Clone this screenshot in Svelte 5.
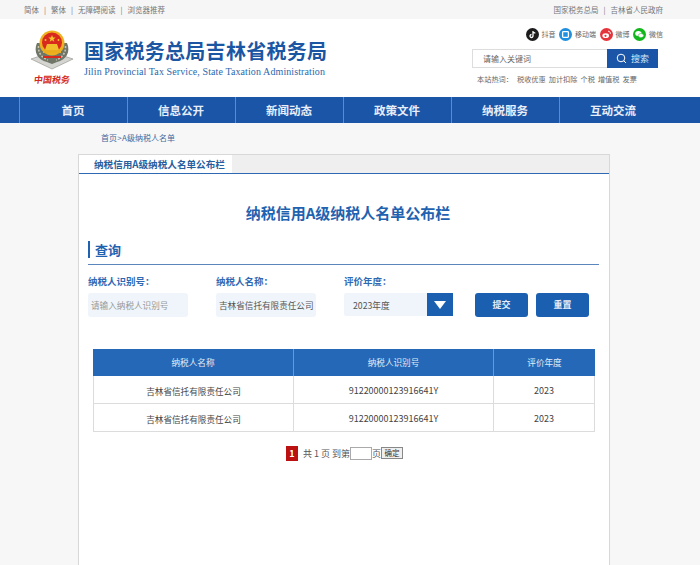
<script>
  const navItems = ['首页', '信息公开', '新闻动态', '政策文件', '纳税服务', '互动交流'];
  const hotWords = ['税收优惠', '加计扣除', '个税', '增值税', '发票'];
  const rows = [
    { name: '吉林省信托有限责任公司', id: '91220000123916641Y', year: '2023' },
    { name: '吉林省信托有限责任公司', id: '91220000123916641Y', year: '2023' }
  ];
</script>

<div class="page">
  <div class="topbar">
    <div class="links">
      <span>简体</span><i>|</i><span>繁体</span><i>|</i><span>无障碍阅读</span><i>|</i><span>浏览器推荐</span>
    </div>
    <div class="links right">
      <span>国家税务总局</span><i>|</i><span>吉林省人民政府</span>
    </div>
  </div>

  <header class="header">
    <div class="logo">
      <svg width="44" height="42" viewBox="0 0 44 42" aria-hidden="true">
        <path d="M1 29 L13 25 L22 33 L31 25 L43 29 L22 39 Z" fill="#d4d4d0" stroke="#8d8d88" stroke-width="0.6"/>
        <path d="M7 13 C3 22 8 30 17 32 L22 34 L27 32 C36 30 41 22 37 13 Z" fill="#6f7668"/>
        <path d="M8.5 16 C8 23 12 28 18 30 M35.5 16 C36 23 32 28 26 30" fill="none" stroke="#c9c5b0" stroke-width="1.6" stroke-dasharray="2 1.5"/>
        <circle cx="22" cy="13" r="12.5" fill="#edb11f"/>
        <circle cx="22" cy="12.5" r="10" fill="#d9281e"/>
        <path d="M22 5 l1 2.6 2.7 0 -2.2 1.6 .8 2.6 -2.3 -1.6 -2.3 1.6 .8 -2.6 -2.2 -1.6 2.7 0 Z" fill="#f4c52d"/>
        <circle cx="15.5" cy="10" r="1" fill="#f4c52d"/>
        <circle cx="28.5" cy="10" r="1" fill="#f4c52d"/>
        <path d="M15 20 L17 14 H27 L29 20 Z" fill="#f1bd2b"/>
        <rect x="13" y="20" width="18" height="3" fill="#e9ad1e"/>
        <path d="M13 27 H31" stroke="#d9281e" stroke-width="2"/>
      </svg>
      <span class="logo-cn">中国税务</span>
    </div>
    <div class="brand">
      <div class="brand-cn">国家税务总局吉林省税务局</div>
      <div class="brand-en">Jilin Provincial Tax Service, State Taxation Administration</div>
    </div>
    <div class="tools">
      <div class="socials">
        <span class="social">
          <svg width="13" height="13" viewBox="0 0 13 13" aria-hidden="true"><circle cx="6.5" cy="6.5" r="6.5" fill="#1c1c1c"/><path d="M7 3 V8 A1.5 1.5 0 1 1 5.5 6.5 M7 3 C7.2 4.3 8 5 9.3 5.1" fill="none" stroke="#fff" stroke-width="1.3"/></svg>
          抖音
        </span>
        <span class="social">
          <svg width="13" height="13" viewBox="0 0 13 13" aria-hidden="true"><circle cx="6.5" cy="6.5" r="6.5" fill="#1f8fe0"/><rect x="3.6" y="3.6" width="5.8" height="5.8" rx="0.8" fill="none" stroke="#fff" stroke-width="1.3"/></svg>
          移动端
        </span>
        <span class="social">
          <svg width="13" height="13" viewBox="0 0 13 13" aria-hidden="true"><circle cx="6.5" cy="6.5" r="6.5" fill="#e5343c"/><ellipse cx="5.7" cy="7.7" rx="3.3" ry="2.4" fill="#fff"/><circle cx="5.5" cy="7.8" r="1.1" fill="#e5343c"/><path d="M8 3.2 C9.6 3.2 10.6 4.3 10.4 5.9" fill="none" stroke="#fff" stroke-width="0.9"/></svg>
          微博
        </span>
        <span class="social">
          <svg width="13" height="13" viewBox="0 0 13 13" aria-hidden="true"><circle cx="6.5" cy="6.5" r="6.5" fill="#12b71d"/><ellipse cx="5.4" cy="5.6" rx="3.2" ry="2.5" fill="#fff"/><ellipse cx="8" cy="7.6" rx="2.7" ry="2.1" fill="#fff" stroke="#12b71d" stroke-width="0.5"/></svg>
          微信
        </span>
      </div>
      <div class="search">
        <div class="search-input">请输入关键词</div>
        <div class="search-btn">
          <svg width="11" height="11" viewBox="0 0 11 11" aria-hidden="true"><circle cx="5" cy="5" r="3.8" fill="none" stroke="#fff" stroke-width="1"/><path d="M7.8 7.8 L10 10" stroke="#fff" stroke-width="1"/></svg>
          搜索
        </div>
      </div>
      <div class="hot">
        <span class="hot-label">本站热词：</span>
        {#each hotWords as w}<span>{w}</span>{/each}
      </div>
    </div>
  </header>

  <nav class="nav">
    {#each navItems as item}
      <div class="nav-item">{item}</div>
    {/each}
  </nav>

  <div class="crumb">首页 &gt; A级纳税人名单</div>

  <main class="card">
    <div class="tabs">
      <div class="tab">纳税信用A级纳税人名单公布栏</div>
    </div>
    <h1 class="title">纳税信用A级纳税人名单公布栏</h1>
    <div class="section"><span class="section-text">查询</span></div>

    <form class="form">
      <div class="field">
        <div class="label">纳税人识别号：</div>
        <div class="box placeholder">请输入纳税人识别号</div>
      </div>
      <div class="field">
        <div class="label">纳税人名称：</div>
        <div class="box">吉林省信托有限责任公司</div>
      </div>
      <div class="field">
        <div class="label">评价年度：</div>
        <div class="select">
          <span class="select-value">2023年度</span>
          <span class="select-arrow"><span class="tri"></span></span>
        </div>
      </div>
      <div class="buttons">
        <div class="btn">提交</div>
        <div class="btn">重置</div>
      </div>
    </form>

    <div class="table">
      <div class="row head">
        <div class="cell c1">纳税人名称</div>
        <div class="cell c2">纳税人识别号</div>
        <div class="cell c3">评价年度</div>
      </div>
      {#each rows as r}
        <div class="row">
          <div class="cell c1">{r.name}</div>
          <div class="cell c2 num">{r.id}</div>
          <div class="cell c3 num">{r.year}</div>
        </div>
      {/each}
    </div>

    <div class="pager">
      <span class="cur">1</span>
      <span class="total">共 1 页 到第</span>
      <span class="page-input"></span>
      <span>页</span>
      <span class="go">确定</span>
    </div>
  </main>
</div>

<style>
  :global(body) {
    margin: 0;
    background: #f7f7f7;
    font-family: "Noto Sans CJK SC", "Noto Sans", sans-serif;
    overflow: hidden;
  }
  .page {
    width: 700px;
    height: 565px;
    overflow: hidden;
    font-size: 9px;
    color: #555;
  }
  .topbar {
    height: 19px;
    background: #f6f6f6;
    display: flex;
    justify-content: space-between;
    align-items: center;
    padding: 0 37px 0 24px;
    color: #777;
    font-size: 7.5px;
    box-sizing: border-box;
  }
  .links { display: flex; align-items: center; }
  .links i { font-style: normal; margin: 0 5px; font-size: 7.5px; }
  .header {
    height: 78px;
    background: #fff;
    display: flex;
    position: relative;
    box-sizing: border-box;
    padding-left: 30px;
  }
  .logo {
    width: 44px;
    margin-top: 11px;
    display: flex;
    flex-direction: column;
    align-items: center;
  }
  .logo svg { display: block; }
  .logo-cn {
    color: #d42a20;
    font-size: 9px;
    line-height: 12px;
    font-weight: 700;
    margin-top: 2px;
    transform: skewX(-8deg);
    white-space: nowrap;
  }
  .brand { margin-left: 10px; padding-top: 20px; }
  .brand-cn {
    font-size: 20px;
    font-weight: 700;
    line-height: 24px;
    letter-spacing: 0.27px;
    color: #1b56a3;
    white-space: nowrap;
  }
  .brand-en {
    font-family: "Liberation Serif", serif;
    font-size: 10px;
    line-height: 12px;
    margin-top: 3px;
    letter-spacing: 0.1px;
    color: #2e68ac;
    white-space: nowrap;
  }
  .tools {
    margin-left: auto;
    width: 186px;
    margin-right: 42px;
    padding-top: 8px;
  }
  .socials {
    display: flex;
    justify-content: flex-end;
    gap: 3.5px;
    height: 14px;
    margin-right: -5px;
  }
  .social {
    display: flex;
    align-items: center;
    gap: 3px;
    font-size: 7px;
    color: #666;
    white-space: nowrap;
  }
  .search {
    display: flex;
    height: 19px;
    margin-top: 8px;
  }
  .search-input {
    flex: 1;
    border: 1px solid #ddd;
    border-right: none;
    box-sizing: border-box;
    padding-left: 10px;
    font-size: 8px;
    line-height: 18px;
    color: #666;
  }
  .search-btn {
    width: 51px;
    background: #1a55a8;
    color: #d8e5f5;
    font-size: 9px;
    display: flex;
    align-items: center;
    justify-content: center;
    gap: 4px;
  }
  .hot {
    margin-top: 5px;
    padding-left: 5px;
    display: flex;
    gap: 3px;
    font-size: 7.2px;
    line-height: 12px;
    color: #666;
    white-space: nowrap;
  }
  .hot-label { margin-right: 1px; }
  .nav {
    height: 26px;
    background: #1a55a8;
    display: flex;
    padding-left: 19px;
  }
  .nav-item {
    width: 108px;
    box-sizing: border-box;
    border-left: 1px solid #5f8ac6;
    padding-right: 1px;
    color: #e8eef8;
    font-size: 11.5px;
    font-weight: 700;
    line-height: 26px;
    text-align: center;
  }
  .crumb {
    height: 31px;
    padding: 9px 0 0 101px;
    box-sizing: border-box;
    font-size: 8px;
    line-height: 12px;
    color: #3f6a9f;
    word-spacing: -1.5px;
  }
  .card {
    margin-left: 78px;
    width: 532px;
    height: 420px;
    background: #fff;
    border: 1px solid #d8d8d8;
    box-sizing: border-box;
  }
  .tabs {
    height: 18px;
    background: #efefef;
    border-bottom: 1px solid #2f69b4;
  }
  .tab {
    width: 153px;
    height: 19px;
    background: #fff;
    box-sizing: border-box;
    padding-left: 15px;
    color: #24609f;
    font-size: 9.6px;
    font-weight: 700;
    line-height: 18px;
    white-space: nowrap;
    border-bottom: 1px solid #2f69b4;
  }
  .title {
    margin: 28px 0 0;
    text-align: center;
    font-size: 15px;
    font-weight: 700;
    line-height: 22px;
    color: #1f62b0;
    padding-left: 8px;
  }
  .section {
    margin: 17px 10px 0 9px;
    height: 23px;
    border-bottom: 1px solid #5b86bd;
  }
  .section-text {
    display: block;
    height: 17px;
    border-left: 2px solid #1f62b0;
    padding-left: 5px;
    font-size: 13px;
    font-weight: 700;
    line-height: 17px;
    color: #1f62b0;
  }
  .form {
    display: flex;
    margin: 9px 0 0 9px;
  }
  .field { width: 128px; flex: none; }
  .label {
    font-size: 9.5px;
    font-weight: 700;
    line-height: 14px;
    color: #2f69b4;
    white-space: nowrap;
  }
  .box {
    width: 100px;
    height: 24px;
    margin-top: 5px;
    background: #eff5fa;
    border-radius: 3px;
    box-sizing: border-box;
    padding-left: 3px;
    font-size: 8.6px;
    line-height: 24px;
    color: #555;
    white-space: nowrap;
  }
  .placeholder { color: #999; }
  .select {
    width: 109px;
    height: 23px;
    margin-top: 5px;
    background: #eff5fa;
    border-radius: 2px 0 0 2px;
    display: flex;
    justify-content: space-between;
  }
  .select-value {
    padding-left: 9px;
    font-size: 8.7px;
    line-height: 25px;
    color: #555;
  }
  .select-arrow {
    width: 26px;
    background: #1a5fb0;
    display: flex;
    align-items: center;
    justify-content: center;
  }
  .tri {
    width: 0;
    height: 0;
    border-left: 6px solid transparent;
    border-right: 6px solid transparent;
    border-top: 8px solid #fff;
  }
  .buttons {
    display: flex;
    gap: 8px;
    margin: 19px 0 0 3px;
  }
  .btn {
    width: 53px;
    height: 24px;
    background: #1a5fb0;
    border-radius: 3px;
    color: #e4edf8;
    font-size: 9px;
    font-weight: 700;
    line-height: 24px;
    text-align: center;
  }
  .table {
    margin: 32px 0 0 14px;
    width: 502px;
    border-left: 1px solid #dcdcdc;
    border-right: 1px solid #dcdcdc;
    box-sizing: border-box;
  }
  .row {
    display: flex;
    height: 28px;
    border-bottom: 1px solid #dcdcdc;
    box-sizing: border-box;
  }
  .cell {
    text-align: center;
    line-height: 30px;
    font-size: 8.6px;
    color: #444;
    box-sizing: border-box;
    white-space: nowrap;
  }
  .num { font-size: 9px; }
  .c1 { width: 200px; border-right: 1px solid #dcdcdc; }
  .c2 { width: 200px; border-right: 1px solid #dcdcdc; }
  .c3 { flex: 1; }
  .head {
    height: 27px;
    background: #2468b7;
    border-bottom: none;
    margin: 0 -1px;
  }
  .head .cell {
    color: #e2ebf6;
    border-right-color: #6d98cf;
    line-height: 27px;
  }
  .head .c1 { width: 201px; }
  .pager {
    display: flex;
    align-items: center;
    margin: 13px 0 0 207px;
    height: 16px;
    font-size: 9px;
    color: #555;
    white-space: nowrap;
  }
  .cur {
    width: 12px;
    height: 15px;
    background: #bb1111;
    color: #fff;
    font-weight: 700;
    font-size: 9px;
    line-height: 15px;
    text-align: center;
    margin-right: 5px;
  }
  .page-input {
    width: 20px;
    height: 11px;
    border: 1px solid #aaa;
    background: #fff;
  }
  .go {
    width: 20px;
    height: 10px;
    border: 1px solid #888;
    background: #efefef;
    font-size: 7.5px;
    line-height: 10px;
    text-align: center;
    color: #333;
  }
</style>
